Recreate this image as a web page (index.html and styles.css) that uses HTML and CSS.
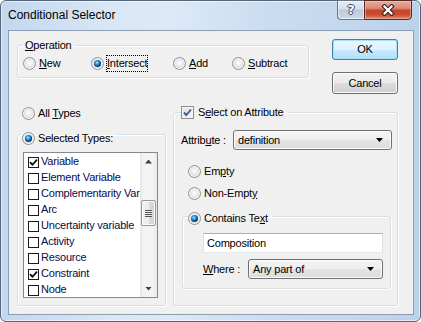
FILE: index.html
```html
<!DOCTYPE html>
<html>
<head>
<meta charset="utf-8">
<title>Conditional Selector</title>
<link rel="stylesheet" href="styles.css">
</head>
<body>
<div class="window">
  <div class="titlebar">
    <span class="title">Conditional Selector</span>
    <div class="caption">
      <div class="cap-btn help"><span class="q">?</span></div>
      <div class="cap-btn close">
        <svg width="14" height="12" viewBox="0 0 14 12"><path d="M3.5 2.5 L10.5 9.5 M10.5 2.5 L3.5 9.5" stroke="#3a2424" stroke-width="4.4" stroke-linecap="square" fill="none"/><path d="M3.5 2.5 L10.5 9.5 M10.5 2.5 L3.5 9.5" stroke="#ffffff" stroke-width="2.2" stroke-linecap="square" fill="none"/></svg>
      </div>
    </div>
  </div>
  <div class="client">
    <div class="top-row">
      <fieldset class="group op">
        <legend class="op-legend"><u>O</u>peration</legend>
        <div class="op-row">
          <label class="opt w-new"><span class="radio"></span><span class="txt"><u>N</u>ew</span></label>
          <label class="opt w-int"><span class="radio on"></span><span class="txt focus"><u>I</u>ntersect</span></label>
          <label class="opt w-add"><span class="radio"></span><span class="txt"><u>A</u>dd</span></label>
          <label class="opt"><span class="radio"></span><span class="txt"><u>S</u>ubtract</span></label>
        </div>
      </fieldset>
      <div class="buttons">
        <div class="btn default">OK</div>
        <div class="btn cancel">Cancel</div>
      </div>
    </div>
    <div class="bottom-row">
      <div class="left-col">
        <label class="opt all"><span class="radio"></span><span class="txt">All <u>T</u>ypes</span></label>
        <fieldset class="group types">
          <legend class="opt types-legend"><span class="radio on"></span><span class="txt">Selected Types:</span></legend>
          <div class="listbox">
            <div class="items">
              <div class="item"><span class="cb"><svg width="9" height="9" viewBox="0 0 9 9"><path d="M1 4.2 L3.4 6.8 L8 1.6" stroke="#000" stroke-width="1.7" fill="none"/></svg></span>Variable</div>
              <div class="item"><span class="cb"></span>Element Variable</div>
              <div class="item"><span class="cb"></span>Complementarity Variable</div>
              <div class="item"><span class="cb"></span>Arc</div>
              <div class="item"><span class="cb"></span>Uncertainty variable</div>
              <div class="item"><span class="cb"></span>Activity</div>
              <div class="item"><span class="cb"></span>Resource</div>
              <div class="item"><span class="cb"><svg width="9" height="9" viewBox="0 0 9 9"><path d="M1 4.2 L3.4 6.8 L8 1.6" stroke="#000" stroke-width="1.7" fill="none"/></svg></span>Constraint</div>
              <div class="item"><span class="cb"></span>Node</div>
            </div>
            <div class="vscroll">
              <div class="sarrow"><span class="tri up"></span></div>
              <div class="track"><div class="thumb"><span class="grip"></span></div></div>
              <div class="sarrow"><span class="tri down"></span></div>
            </div>
          </div>
        </fieldset>
      </div>
      <fieldset class="group attr">
        <legend class="opt attr-legend"><span class="chk"><svg width="11" height="11" viewBox="0 0 11 11"><path d="M2 5.5 L4.3 8 L9 2.5" stroke="#3d5a99" stroke-width="1.9" fill="none"/></svg></span><span class="txt">S<u>e</u>lect on Attribute</span></legend>
        <div class="attr-row">
          <span class="lbl lbl-attr">Attrib<u>u</u>te :</span>
          <div class="combo combo-attr"><span>definition</span><span class="caret"></span></div>
        </div>
        <label class="opt r-empty"><span class="radio"></span><span class="txt">Em<u>p</u>ty</span></label>
        <label class="opt r-nonempty"><span class="radio"></span><span class="txt">Non-Empt<u>y</u></span></label>
        <fieldset class="group contains">
          <legend class="opt contains-legend"><span class="radio on"></span><span class="txt">Contains Te<u>x</u>t</span></legend>
          <div class="textbox">Composition</div>
          <div class="where-row">
            <span class="lbl lbl-where"><u>W</u>here :</span>
            <div class="combo combo-where"><span>Any part of</span><span class="caret"></span></div>
          </div>
        </fieldset>
      </fieldset>
    </div>
  </div>
</div>
</body>
</html>
```

FILE: styles.css
```css
* { box-sizing: border-box; }
html, body { margin: 0; padding: 0; background: #ffffff; }
body {
  font-family: "Liberation Sans", Arial, sans-serif;
  font-size: 11px;
  line-height: 13px;
  letter-spacing: -0.2px;
  color: #000;
}
u { text-decoration: underline; text-underline-offset: 1px; }
fieldset { margin: 0; }
legend { padding: 0 2px; margin: 0; }

.window {
  width: 421px;
  height: 322px;
  border: 1px solid #56677a;
  border-radius: 6px;
  background: linear-gradient(90deg, #c2d7ee 0%, #d8e6f5 25%, #dce9f7 40%, #cadcf0 65%, #bcd2eb 100%);
  box-shadow: inset 0 0 0 1px rgba(255,255,255,0.55);
  padding: 0 6px 6px 7px;
  display: flex;
  flex-direction: column;
}

.titlebar {
  height: 29px;
  display: flex;
  align-items: flex-start;
  flex: none;
}
.title {
  font-size: 12px;
  line-height: 15px;
  letter-spacing: 0;
  margin-top: 7px;
  color: #000;
}
.caption {
  margin-left: auto;
  margin-right: 2px;
  margin-top: -1px;
  display: flex;
}
.cap-btn {
  height: 20px;
  display: flex;
  align-items: center;
  justify-content: center;
}
.help {
  width: 27px;
  border: 1px solid #65768a;
  border-right: 0;
  border-radius: 0 0 0 4px;
  background: linear-gradient(#e6edf5 0%, #d5e0ec 45%, #bccbdc 50%, #c5d4e5 85%, #d4e1ef 100%);
  box-shadow: inset 0 0 0 1px rgba(255,255,255,0.5);
}
.q {
  font-family: "DejaVu Sans", sans-serif;
  font-weight: bold;
  font-size: 13px;
  line-height: 14px;
  color: #ffffff;
  text-shadow: 1px 0 0 #3d4c5e, -1px 0 0 #3d4c5e, 0 1px 0 #3d4c5e, 0 -1px 0 #3d4c5e;
}
.close {
  width: 48px;
  border: 1px solid #552a22;
  border-radius: 0 0 4px 0;
  background: linear-gradient(#e8ab9d 0%, #dc8a78 40%, #c8452b 52%, #c94b30 75%, #e08c72 100%);
  box-shadow: inset 0 0 0 1px rgba(255,210,200,0.45);
}
.close svg { display: block; }

.client {
  flex: 1;
  border: 1px solid #8a9db3;
  background: #f0f0f0;
  display: flex;
  flex-direction: column;
}

/* group boxes */
.group {
  min-width: 0;
  border: 1px solid #d5dfe5;
  border-radius: 3px;
  box-shadow: inset 1px 1px 0 #ffffff, 1px 1px 0 #ffffff;
}

.top-row {
  display: flex;
  align-items: flex-start;
  margin: 8px 0 0 8px;
}
.op {
  width: 292px;
  padding: 3px 5px 6px 5px;
}
.op-legend { line-height: 13px; }
.op-row {
  display: flex;
  align-items: center;
  height: 16px;
}
.opt {
  display: flex;
  align-items: center;
  white-space: nowrap;
}
.w-new { width: 68px; }
.w-int { width: 82px; }
.w-add { width: 59px; }

.radio {
  position: relative;
  flex: none;
  width: 13px;
  height: 13px;
  border-radius: 50%;
  border: 1px solid #8f9297;
  background: radial-gradient(circle at 50% 45%, #ffffff 0, #f3f3f3 2px, #dcdcdc 5px, #cbcbcb 6px);
  box-shadow: inset 0 0 0 1px #f6f6f6;
}
.radio.on::after {
  content: "";
  position: absolute;
  left: 2px;
  top: 2px;
  width: 7px;
  height: 7px;
  border-radius: 50%;
  background: radial-gradient(circle at 42% 38%, #b6ecff 0, #35a5e6 1.5px, #0f61ac 3px, #113a66 3.6px);
}
.txt {
  margin-left: 2px;
  border: 1px dotted transparent;
  line-height: 13px;
}
.txt.focus { border-color: #000; padding: 1px 0; }

.buttons {
  margin-left: 23px;
  display: flex;
  flex-direction: column;
}
.btn {
  width: 66px;
  height: 21px;
  display: flex;
  align-items: center;
  justify-content: center;
  border: 1px solid #707070;
  border-radius: 3px;
  background: linear-gradient(#f2f2f2 0%, #ebebeb 50%, #dddddd 50%, #cfcfcf 100%);
  box-shadow: inset 0 0 0 1px #fbfbfb;
}
.btn.default {
  border-color: #3c7fb1;
  background: linear-gradient(#ecf7fd 0%, #def2fc 50%, #c8eafd 50%, #b4def6 100%);
  box-shadow: inset 0 0 0 1px #a6e0f8;
}
.btn.cancel { margin-top: 12px; height: 22px; }

.bottom-row {
  display: flex;
  align-items: flex-start;
  margin: 12px 0 0 8px;
}
.left-col {
  width: 149px;
  flex: none;
  display: flex;
  flex-direction: column;
}
.all { margin-left: 5px; }
.types {
  margin-top: 2px;
  width: 149px;
  padding: 6px 7px 7px 5px;
}
.types > .types-legend {
  padding: 8px 3px 0 0;
  margin-left: -1px;
}
.listbox {
  width: 135px;
  height: 146px;
  border: 1px solid #828790;
  background: #ffffff;
  display: flex;
}
.items {
  flex: 1;
  min-width: 0;
  overflow: hidden;
  padding-left: 4px;
}
.item {
  height: 16px;
  display: flex;
  align-items: center;
  white-space: nowrap;
  color: #0a0a4a;
}
.cb {
  flex: none;
  width: 11px;
  height: 11px;
  border: 1px solid #1a1a1a;
  background: #fff;
  margin-right: 2px;
  margin-top: 2px;
  display: flex;
  align-items: center;
  justify-content: center;
}
.cb svg { display: block; }

.vscroll {
  width: 17px;
  flex: none;
  display: flex;
  flex-direction: column;
  background: linear-gradient(90deg, #e5e5e5 0%, #f3f3f3 20%, #f3f3f3 80%, #e9e9e9 100%);
}
.sarrow {
  height: 17px;
  display: flex;
  align-items: center;
  justify-content: center;
}
.tri {
  width: 7px;
  height: 4px;
  background: #404040;
}
.tri.up { clip-path: polygon(50% 0, 100% 100%, 0 100%); }
.tri.down { clip-path: polygon(0 0, 100% 0, 50% 100%); }
.track { flex: 1; }
.thumb {
  margin: 30px 1px 0 1px;
  height: 26px;
  border: 1px solid #979797;
  border-radius: 2px;
  background: linear-gradient(90deg, #f3f3f3 0%, #ececec 50%, #dcdcdc 50%, #d1d1d1 100%);
  box-shadow: inset 0 0 0 1px #fafafa;
  display: flex;
  align-items: center;
  justify-content: center;
}
.grip {
  width: 7px;
  height: 7px;
  background: repeating-linear-gradient(#565656 0, #565656 1px, #e8e8e8 1px, #e8e8e8 2px);
}

.attr {
  flex: none;
  margin-left: 7px;
  margin-top: -1px;
  width: 225px;
  padding: 10px 5px 16px 7px;
}
.attr > .attr-legend { padding: 0 3px 0 0; }
.chk {
  flex: none;
  width: 13px;
  height: 13px;
  border: 1px solid #8f8f8f;
  background: linear-gradient(135deg, #e0e0e0 0%, #fafafa 100%);
  box-shadow: inset 0 0 0 1px #f4f4f4;
  display: flex;
  align-items: center;
  justify-content: center;
}
.chk svg { display: block; }
.attr-legend .txt { margin-left: 3px; }

.attr-row {
  display: flex;
  align-items: center;
}
.lbl { white-space: nowrap; }
.lbl-attr { width: 52px; }
.combo {
  height: 20px;
  display: flex;
  align-items: center;
  padding: 0 8px 0 4px;
  border: 1px solid #707070;
  border-radius: 3px;
  background: linear-gradient(#f5f5f5 0%, #eeeeee 50%, #e4e4e4 50%, #dcdcdc 100%);
  box-shadow: inset 0 0 0 1px #fcfcfc;
}
.combo span:first-child { flex: 1; }
.caret {
  width: 7px;
  height: 4px;
  background: #000;
  clip-path: polygon(0 0, 100% 0, 50% 100%);
}
.combo-attr { width: 159px; }
.r-empty { margin: 14px 0 0 7px; }
.r-nonempty { margin: 7px 0 0 7px; }

.contains {
  margin-top: 6px;
  margin-left: 1px;
  width: 209px;
  padding: 7px 6px 9px 5px;
}
.contains > .contains-legend { padding: 4px 3px 0 0; }
.textbox {
  margin-left: 15px;
  width: 180px;
  height: 20px;
  border: 1px solid #dbdfe6;
  border-top-color: #abadb3;
  border-bottom-color: #e3e9ef;
  background: #fff;
  padding-left: 3px;
  display: flex;
  align-items: center;
}
.where-row {
  display: flex;
  align-items: center;
  margin: 6px 0 0 15px;
}
.lbl-where { width: 45px; }
.combo-where { width: 135px; }
```
